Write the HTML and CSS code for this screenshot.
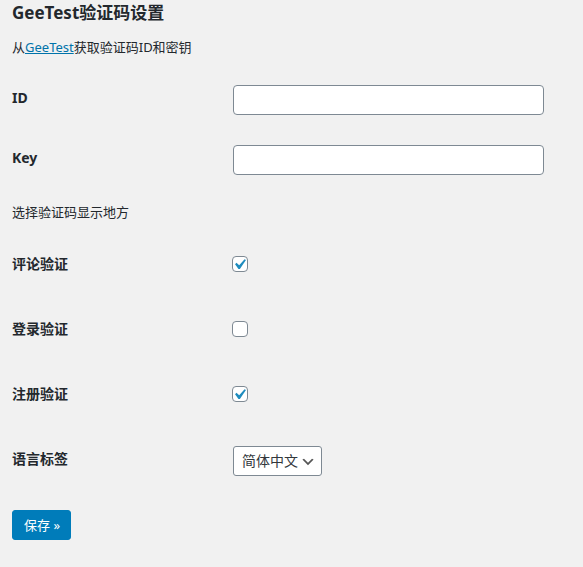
FILE: index.html
```html
<!DOCTYPE html>
<html lang="zh-CN">
<head>
<meta charset="utf-8">
<title>GeeTest验证码设置</title>
<link rel="stylesheet" href="styles.css">
</head>
<body>
<div class="wrap">
  <h2 class="title">GeeTest验证码设置</h2>
  <p class="intro">从<a href="#" class="link">GeeTest</a>获取验证码ID和密钥</p>

  <div class="form-table">
    <div class="row row-input">
      <div class="label">ID</div>
      <div class="control"><div class="text-input"></div></div>
    </div>
    <div class="row row-input">
      <div class="label">Key</div>
      <div class="control"><div class="text-input"></div></div>
    </div>
  </div>

  <p class="section-note">选择验证码显示地方</p>

  <div class="form-table">
    <div class="row row-check">
      <div class="label">评论验证</div>
      <div class="control control-check">
        <span class="checkbox"><svg class="tick" viewBox="0 0 20 20"><path d="M14.83 4.89l1.34.94-5.81 8.38H9.02L5.78 9.67l1.34-1.25 2.57 2.4z"/></svg></span>
      </div>
    </div>
    <div class="row row-check">
      <div class="label">登录验证</div>
      <div class="control control-check">
        <span class="checkbox"></span>
      </div>
    </div>
    <div class="row row-check">
      <div class="label">注册验证</div>
      <div class="control control-check">
        <span class="checkbox"><svg class="tick" viewBox="0 0 20 20"><path d="M14.83 4.89l1.34.94-5.81 8.38H9.02L5.78 9.67l1.34-1.25 2.57 2.4z"/></svg></span>
      </div>
    </div>
    <div class="row row-input">
      <div class="label">语言标签</div>
      <div class="control">
        <div class="select">
          <span class="select-text">简体中文</span>
          <svg class="chevron" viewBox="0 0 20 20"><path d="M5 6l5 5 5-5 2 1-7 7-7-7 2-1z"/></svg>
        </div>
      </div>
    </div>
  </div>

  <div class="submit">
    <span class="button-primary">保存 »</span>
  </div>
</div>
</body>
</html>
```

FILE: styles.css
```css
html, body {
  margin: 0;
  padding: 0;
  background: #f1f1f1;
}

body {
  color: #23282d;
  font-family: "Noto Sans", "Noto Sans CJK SC", sans-serif;
  font-size: 13px;
  line-height: 1.5;
}

.wrap {
  padding: 0 12px;
}

.title {
  margin: 2px 0 0;
  font-size: 17px;
  line-height: 22px;
  font-weight: 700;
  color: #23282d;
}

.intro {
  margin: 14px 0 0;
  font-size: 13px;
  line-height: 19.5px;
}

.link {
  color: #0073aa;
  text-decoration: underline;
}

.form-table {
  display: flex;
  flex-direction: column;
}

.form-table:first-of-type {
  margin-top: 12.5px;
}

.row {
  display: flex;
  align-items: flex-start;
}

.row-input {
  height: 60px;
}

.row-check {
  height: 65px;
}

.label {
  width: 221px;
  flex: none;
  padding-top: 19px;
  font-size: 14px;
  line-height: 18px;
  font-weight: 700;
  color: #23282d;
}

.control {
  padding-top: 15px;
}

.control-check {
  padding-top: 20.5px;
  margin-left: -1px;
}

.text-input {
  box-sizing: border-box;
  width: 311px;
  height: 30px;
  background: #fff;
  border: 1px solid #7e8993;
  border-radius: 4px;
}

.section-note {
  margin: 13px 0 13px;
  font-size: 13px;
  line-height: 19.5px;
}

.checkbox {
  display: block;
  box-sizing: border-box;
  width: 16px;
  height: 16px;
  background: #fff;
  border: 1px solid #7e8993;
  border-radius: 4px;
}

.tick {
  display: block;
  width: 21px;
  height: 21px;
  margin: -3px 0 0 -4px;
  fill: #1e8cbe;
}

.select {
  box-sizing: border-box;
  display: flex;
  align-items: center;
  width: 89px;
  height: 30px;
  padding: 0 5px 0 8px;
  background: #fff;
  border: 1px solid #7e8993;
  border-radius: 3px;
  font-size: 14px;
  color: #32373c;
}

.select-text {
  flex: 1;
  line-height: 28px;
  white-space: nowrap;
}

.chevron {
  width: 16px;
  height: 16px;
  flex: none;
  margin-top: 2px;
  fill: #555;
}

.submit {
  margin-top: 19.5px;
  display: flex;
}

.button-primary {
  box-sizing: border-box;
  display: inline-flex;
  align-items: center;
  height: 30px;
  padding: 0 10px 0 11px;
  background: #007cba;
  border: 1px solid #007cba;
  border-radius: 3px;
  color: #fff;
  font-size: 13px;
  line-height: 28px;
  white-space: nowrap;
}
```
